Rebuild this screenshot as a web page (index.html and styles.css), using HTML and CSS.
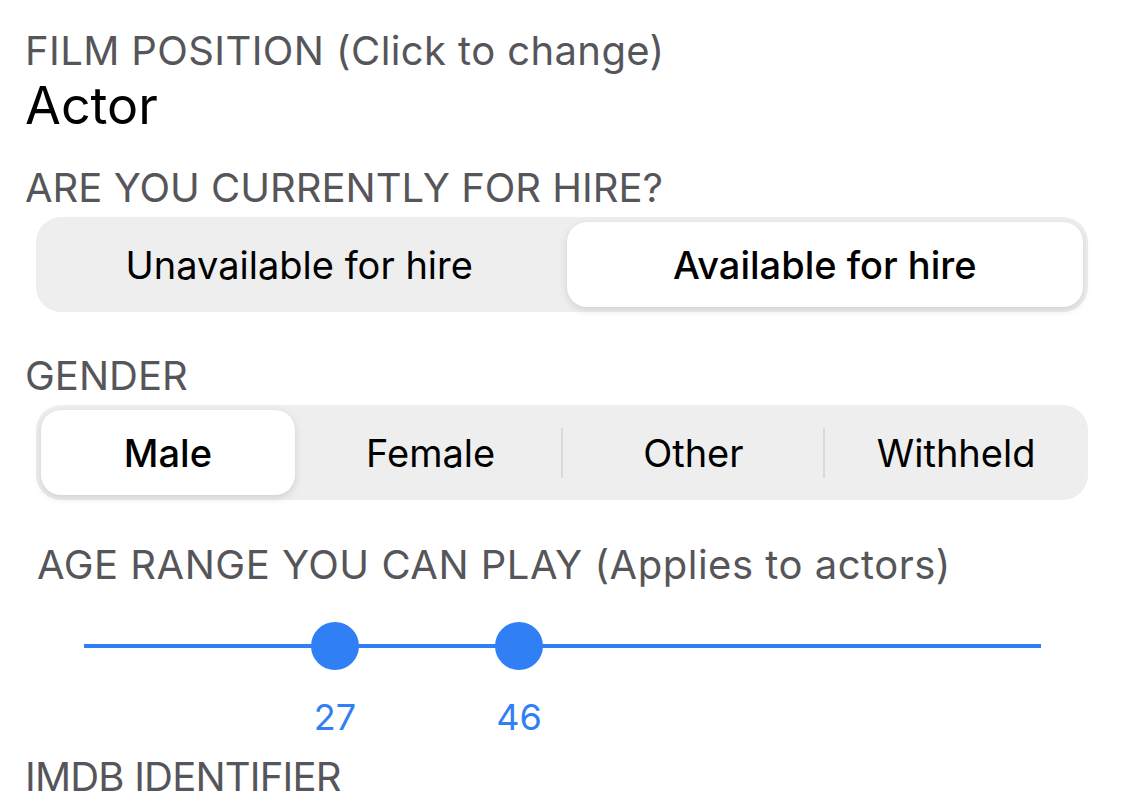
FILE: index.html
```html
<!DOCTYPE html>
<html>
<head>
    <title>Profile</title>
    <link rel="stylesheet" href="styles.css">
</head>
<body>
    <div class="form">
        <div class="label first">FILM POSITION (Click to change)</div>
        <div class="value">Actor</div>

        <div class="label hireLabel">ARE YOU CURRENTLY FOR HIRE?</div>
        <div class="segmented">
            <div class="segment">Unavailable for hire</div>
            <div class="divider hidden"></div>
            <div class="segment selected">Available for hire</div>
        </div>

        <div class="label genderLabel">GENDER</div>
        <div class="segmented">
            <div class="segment selected">Male</div>
            <div class="divider hidden"></div>
            <div class="segment">Female</div>
            <div class="divider"></div>
            <div class="segment">Other</div>
            <div class="divider"></div>
            <div class="segment">Withheld</div>
        </div>

        <div class="label ageLabel">AGE RANGE YOU CAN PLAY (Applies to actors)</div>
        <div class="slider">
            <div class="track"></div>
            <div class="thumb" style="left: 251px"></div>
            <div class="thumb" style="left: 435px"></div>
        </div>
        <div class="sliderValues">
            <span class="ageValue" style="left: 251px">27</span>
            <span class="ageValue" style="left: 435px">46</span>
        </div>

        <div class="label imdbLabel">IMDB IDENTIFIER</div>
    </div>
</body>
</html>
```

FILE: styles.css
```css
body
{
    margin: 0;
    background: #ffffff;
    font-family: Inter, "Noto Sans", sans-serif;
    overflow: hidden;
}
.form
{
    padding: 0 37px 0 25px;
}
.label
{
    font-size: 40px;
    color: #56565a;
    line-height: 48px;
}
.first
{
    padding-top: 27px;
    letter-spacing: 0.4px;
}
.value
{
    margin-top: 1px;
    font-size: 52px;
    color: #000000;
    line-height: 60px;
}
.hireLabel
{
    margin-top: 28px;
}
.segmented
{
    display: flex;
    align-items: center;
    margin: 5px 0 0 11px;
    height: 95px;
    padding: 0 5px;
    background: #eeeeef;
    border-radius: 25px;
    box-sizing: border-box;
}
.segment
{
    flex: 1;
    height: 85px;
    line-height: 86px;
    text-align: center;
    font-size: 38px;
    color: #000000;
    border-radius: 20px;
}
.segment.selected
{
    background: #ffffff;
    font-weight: 500;
    box-shadow: 0 3px 8px rgba(0, 0, 0, 0.12), 0 0 1px rgba(0, 0, 0, 0.06);
}
.divider
{
    width: 2px;
    height: 50px;
    margin: 0 4px 0 3px;
    background: #d9d9dc;
}
.divider.hidden
{
    background: transparent;
}
.genderLabel
{
    margin-top: 40px;
}
.ageLabel
{
    margin: 41px 0 0 12px;
    letter-spacing: 0.5px;
}
.slider
{
    position: relative;
    height: 48px;
    margin: 33px 47px 0 59px;
}
.track
{
    position: absolute;
    left: 0;
    right: 0;
    top: 22px;
    height: 4px;
    background: #307ff5;
}
.thumb
{
    position: absolute;
    top: 0;
    width: 48px;
    height: 48px;
    margin-left: -24px;
    border-radius: 50%;
    background: #307ff5;
}
.sliderValues
{
    position: relative;
    height: 44px;
    margin: 25px 47px 0 59px;
}
.ageValue
{
    position: absolute;
    top: 0;
    transform: translateX(-50%);
    font-size: 36px;
    line-height: 44px;
    color: #307ff5;
}
.imdbLabel
{
    margin-top: 14px;
    letter-spacing: -0.8px;
}
```
